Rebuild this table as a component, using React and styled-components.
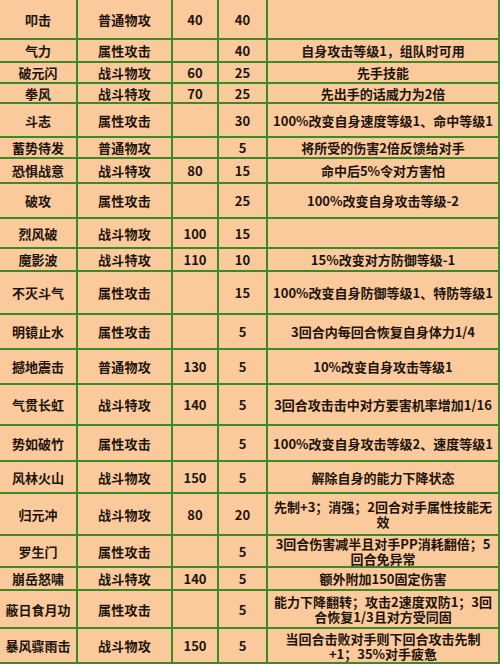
import React from "react";
import styled, { createGlobalStyle } from "styled-components";

const GlobalStyle = createGlobalStyle`
  html, body {
    margin: 0;
    padding: 0;
    background: #fac99c;
  }
  body {
    font-family: "Noto Sans CJK SC", "Liberation Sans", sans-serif;
  }
`;

const Table = styled.div`
  width: 500px;
  height: 664px;
  box-sizing: border-box;
  display: flex;
  flex-direction: column;
  gap: 2px;
  background: #3a8a26;
  padding: 0 2px 2px 0;
  overflow: hidden;
`;

const Row = styled.div`
  display: grid;
  grid-template-columns: 76px 93px 44px 47px 1fr;
  gap: 2px;
  height: ${(p) => p.$h}px;
  flex: none;
`;

const Cell = styled.div`
  background: #fac99c;
  display: flex;
  align-items: center;
  justify-content: center;
  text-align: center;
  color: #1f140a;
  font-size: 13px;
  font-weight: 700;
  line-height: 15px;
  letter-spacing: ${(p) => (p.$wide ? "0.3px" : "0")};
  white-space: nowrap;
`;

const EffectCell = styled(Cell)`
  flex-direction: column;
`;

const Effect = styled.span`
  display: block;
  line-height: 15px;
`;

const rows = [
  ["叩击", "普通物攻", "40", "40", [], 38],
  ["气力", "属性攻击", "", "40", ["自身攻击等级1，组队时可用"], 21],
  ["破元闪", "战斗物攻", "60", "25", ["先手技能"], 19],
  ["拳风", "战斗特攻", "70", "25", ["先出手的话威力为2倍"], 18],
  ["斗志", "属性攻击", "", "30", ["100%改变自身速度等级1、命中等级1"], 32],
  ["蓄势待发", "普通物攻", "", "5", ["将所受的伤害2倍反馈给对手"], 19],
  ["恐惧战意", "战斗特攻", "80", "15", ["命中后5%令对方害怕"], 23],
  ["破攻", "属性攻击", "", "25", ["100%改变自身攻击等级-2"], 33],
  ["烈风破", "战斗物攻", "100", "15", [], 28],
  ["魔影波", "战斗特攻", "110", "10", ["15%改变对方防御等级-1"], 21],
  ["不灭斗气", "属性攻击", "", "15", ["100%改变自身防御等级1、特防等级1"], 41],
  ["明镜止水", "属性攻击", "", "5", ["3回合内每回合恢复自身体力1/4"], 33],
  ["撼地震击", "普通物攻", "130", "5", ["10%改变自身攻击等级1"], 33],
  ["气贯长虹", "战斗特攻", "140", "5", ["3回合攻击击中对方要害机率增加1/16"], 39],
  ["势如破竹", "属性攻击", "", "5", ["100%改变自身攻击等级2、速度等级1"], 34],
  ["风林火山", "战斗物攻", "150", "5", ["解除自身的能力下降状态"], 30],
  ["归元冲", "战斗物攻", "80", "20", ["先制+3；消强；2回合对手属性技能无", "效"], 40],
  ["罗生门", "属性攻击", "", "5", ["3回合伤害减半且对手PP消耗翻倍；5", "回合免异常"], 30],
  ["崩岳怒啸", "战斗特攻", "140", "5", ["额外附加150固定伤害"], 21],
  ["蔽日食月功", "属性攻击", "", "5", ["能力下降翻转；攻击2速度双防1；3回", "合恢复1/3且对方受同固"], 36],
  ["暴风骤雨击", "战斗物攻", "150", "5", ["当回合击败对手则下回合攻击先制", "+1；35%对手疲惫"], 33],
];

export default function App() {
  return (
    <>
      <GlobalStyle />
      <Table>
        {rows.map(([name, kind, power, pp, effect, h]) => (
          <Row key={name} $h={h}>
            <Cell>{name}</Cell>
            <Cell $wide>{kind}</Cell>
            <Cell>{power}</Cell>
            <Cell>{pp}</Cell>
            <EffectCell>
              {effect.map((line) => (
                <Effect key={line}>{line}</Effect>
              ))}
            </EffectCell>
          </Row>
        ))}
      </Table>
    </>
  );
}
